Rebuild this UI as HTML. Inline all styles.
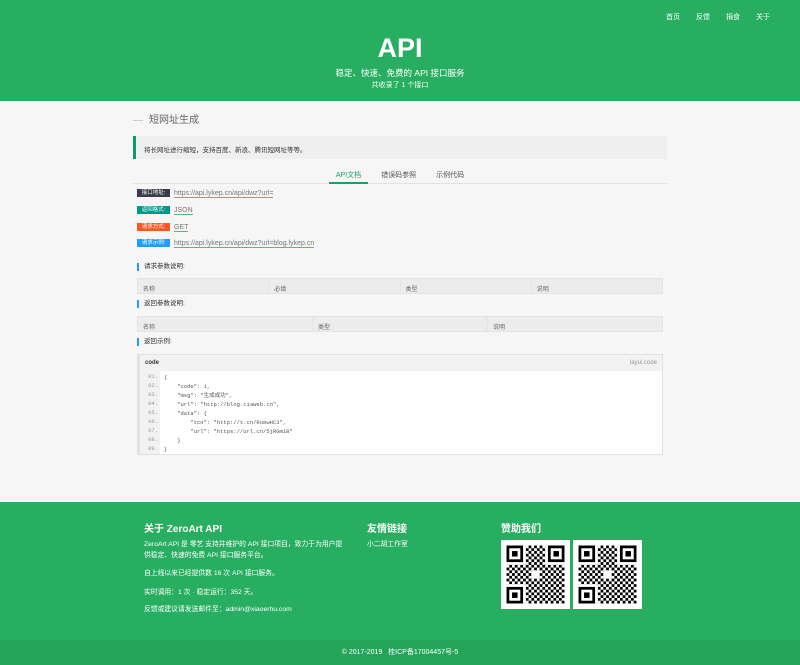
<!DOCTYPE html><html><head><meta charset="utf-8"><style>
*{margin:0;padding:0;box-sizing:border-box}
body{width:800px;height:665px;background:#f6f6f6;font-family:"Liberation Sans","Noto Sans CJK SC",sans-serif;font-size:7px;color:#333;position:relative;overflow:hidden}
.hd{position:absolute;left:0;top:0;width:800px;height:101px;background:#28ae61;color:#fff;text-align:center}
.nav{position:absolute;right:30px;top:12px;font-size:7px}
.nav span{margin-left:16px}
.hd h1{position:absolute;top:33px;width:100%;font-size:27px;font-weight:bold}
.hd .s1{position:absolute;top:67px;width:100%;font-size:8.5px}
.hd .s2{position:absolute;top:80px;width:100%;font-size:7px}
.ab{position:absolute}
.t{left:133px;top:111px;font-size:10px;color:#666}
.t:before{content:"";display:inline-block;width:10px;border-top:1px solid #ccc;vertical-align:middle;margin-right:6px}
.q{left:133px;top:136px;width:534px;height:23px;background:#efefef;border-left:3px solid #0e9a70;padding:8px 0 0 8px;font-size:6.5px}
.tabs{left:133px;top:167px;width:534px;height:17px;border-bottom:1px solid #e2e2e2;text-align:center;font-size:7px;color:#555}
.tabs span{display:inline-block;padding:3px 7px 0;height:17px;margin:0 3px}
.tabs .on{color:#1aa06d;border-bottom:2px solid #1aa06d}
.row{left:137px;font-size:7px;color:#777}
.row b{display:inline-block;font-weight:normal;color:#fff;width:33px;height:8px;line-height:8px;font-size:5.5px;text-align:center;margin-right:4px;vertical-align:middle}
.row u{text-decoration:none;border-bottom:1px solid #5fb878}
.h{left:137px;font-size:6.5px;color:#333;border-left:2px solid #1e9fff;padding-left:5px;height:8px;line-height:8px}
.tb{left:137px;width:526px;height:16px;background:#ececec;border:1px solid #e4e4e4;font-size:6px;color:#666;display:flex}
.tb div{flex:1;padding:5px 0 0 5px;border-left:1px solid #e4e4e4}
.tb div:first-child{border:0}
.code{left:137px;top:354px;width:526px;height:101px;border:1px solid #e2e2e2;border-left:3px solid #e2e2e2;background:#f2f2f2}
.code .top{height:16px;font-size:6px;padding:5px 5px;font-weight:bold}
.code .top i{float:right;font-style:normal;font-weight:normal;color:#999}
.code .bd{position:absolute;left:0;top:16px;right:0;bottom:0;background:#fff;font-family:"Liberation Mono","Noto Sans CJK SC",monospace;font-size:5.5px;color:#555}
.code .ln{position:absolute;left:0;top:0;width:20px;bottom:0;background:#f2f2f2;text-align:right;padding-right:2px;color:#999}
.code .ln div,.code .tx div{height:9px;line-height:9px}
.code .bd>div{padding-top:1px}
.code .tx{position:absolute;left:24px;top:1px;white-space:pre}
.ft{left:0;top:502px;width:800px;height:138px;background:#28ae61;color:#fff}
.fb{left:0;top:640px;width:800px;height:25px;background:#24a55a;color:#fff;text-align:center;font-size:7px;line-height:25px}
.ft h3{position:absolute;font-size:10px;font-weight:bold}
.ft p{position:absolute;font-size:6.8px;line-height:11px}
.qr{position:absolute;top:540px;width:69px;height:69px;background:#fff}
</style></head><body>
<div class="hd"><div class="nav"><span>首页</span><span>反馈</span><span>捐食</span><span>关于</span></div>
<h1>API</h1><div class="s1">稳定、快速、免费的 API 接口服务</div><div class="s2">共收录了 1 个接口</div></div>
<div class="ab t">短网址生成</div>
<div class="ab q">将长网址进行缩短，支持百度、新浪、腾讯短网址等等。</div>
<div class="ab tabs"><span class="on">API文档</span><span>错误码参照</span><span>示例代码</span></div>
<div class="ab row" style="top:189px"><b style="background:#393d49">接口地址:</b><u>https://api.lykep.cn/api/dwz?url=</u></div>
<div class="ab row" style="top:206px"><b style="background:#009688">返回格式:</b><u>JSON</u></div>
<div class="ab row" style="top:223px"><b style="background:#ff5722">请求方式:</b><u>GET</u></div>
<div class="ab row" style="top:239px"><b style="background:#1e9fff">请求示例:</b><u>https://api.lykep.cn/api/dwz?url=blog.lykep.cn</u></div>
<div class="ab h" style="top:263px">请求参数说明:</div>
<div class="ab tb" style="top:278px"><div>名称</div><div>必填</div><div>类型</div><div>说明</div></div>
<div class="ab h" style="top:300px">返回参数说明:</div>
<div class="ab tb" style="top:316px"><div>名称</div><div>类型</div><div>说明</div></div>
<div class="ab h" style="top:338px">返回示例:</div>
<div class="ab code"><div class="top">code<i>layui.code</i></div><div class="bd"><div class="ln"><div>01.</div><div>02.</div><div>03.</div><div>04.</div><div>05.</div><div>06.</div><div>07.</div><div>08.</div><div>09.</div></div>
<div class="tx"><div>{</div><div>    "code": 1,</div><div>    "msg": "生成成功",</div><div>    "url": "http://blog.ciaweb.cn",</div><div>    "data": {</div><div>        "tcn": "http://t.cn/RuewHC3",</div><div>        "url": "https://url.cn/5jRGm1B"</div><div>    }</div><div>}</div></div></div></div>
<div class="ab ft">
<h3 style="left:144px;top:18px">关于 ZeroArt API</h3>
<p style="left:144px;top:37px;width:205px">ZeroArt API 是 零艺 支持并维护的 API 接口项目，致力于为用户提供稳定、快速的免费 API 接口服务平台。</p>
<p style="left:144px;top:66px">自上线以来已经提供数 16 次 API 接口服务。</p>
<p style="left:144px;top:85px">实时调用：1 次 · 稳定运行：352 天。</p>
<p style="left:144px;top:102px">反馈或建议请发送邮件至：admin@xiaoerhu.com</p>
<h3 style="left:367px;top:18px">友情链接</h3>
<p style="left:367px;top:37px">小二胡工作室</p>
<h3 style="left:501px;top:18px">赞助我们</h3>
</div>
<svg class="qr" style="left:501px" viewBox="0 0 25 25"><defs><pattern id="p" width="2" height="2" patternUnits="userSpaceOnUse"><rect width="1" height="1"/><rect x="1" y="1" width="1" height="1"/></pattern></defs><rect x="2" y="2" width="21" height="21" fill="url(#p)"/><g fill="#fff"><rect x="2" y="2" width="7" height="7"/><rect x="16" y="2" width="7" height="7"/><rect x="2" y="16" width="7" height="7"/></g><g fill="none" stroke="#000" stroke-width="1"><rect x="2.5" y="2.5" width="5" height="5"/><rect x="17.5" y="2.5" width="5" height="5"/><rect x="2.5" y="17.5" width="5" height="5"/></g><rect x="4" y="4" width="2" height="2"/><rect x="19" y="4" width="2" height="2"/><rect x="4" y="19" width="2" height="2"/><rect x="11" y="11" width="3" height="3" fill="#fff"/></svg>
<svg class="qr" style="left:573px" viewBox="0 0 25 25"><rect x="2" y="2" width="21" height="21" fill="url(#p)"/><g fill="#fff"><rect x="2" y="2" width="7" height="7"/><rect x="16" y="2" width="7" height="7"/><rect x="2" y="16" width="7" height="7"/></g><g fill="none" stroke="#000" stroke-width="1"><rect x="2.5" y="2.5" width="5" height="5"/><rect x="17.5" y="2.5" width="5" height="5"/><rect x="2.5" y="17.5" width="5" height="5"/></g><rect x="4" y="4" width="2" height="2"/><rect x="19" y="4" width="2" height="2"/><rect x="4" y="19" width="2" height="2"/><rect x="11" y="11" width="3" height="3" fill="#fff"/></svg>
<div class="ab fb">© 2017-2019 &nbsp; 桂ICP备17004457号-5</div>
</body></html>
